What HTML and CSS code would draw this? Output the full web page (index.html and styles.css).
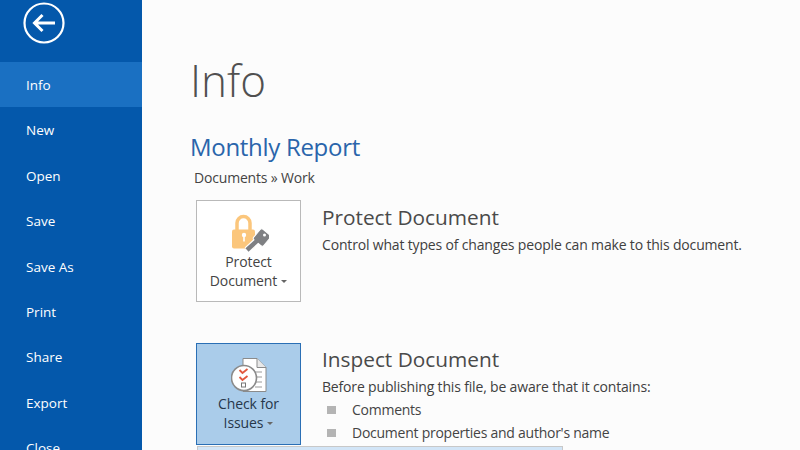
FILE: index.html
```html
<!DOCTYPE html>
<html lang="en">
<head>
    <meta charset="UTF-8">
    <title>Info</title>
    <link rel="stylesheet" href="styles.css">
</head>
<body>
  <div class="backstage">
    <nav class="sidebar">
      <div class="back-wrap">
        <svg class="back-icon" width="42" height="42" viewBox="0 0 42 42">
          <circle cx="21" cy="21" r="19.500" fill="none" stroke="#fff" stroke-width="2.200"/>
          <path d="M32 21H12M19.500 13L11.500 21L19.500 29" fill="none" stroke="#fff" stroke-width="3"/>
        </svg>
      </div>
      <a class="nav-item active">Info</a>
      <a class="nav-item">New</a>
      <a class="nav-item">Open</a>
      <a class="nav-item">Save</a>
      <a class="nav-item">Save As</a>
      <a class="nav-item">Print</a>
      <a class="nav-item">Share</a>
      <a class="nav-item">Export</a>
      <a class="nav-item">Close</a>
    </nav>

    <main class="content">
      <h1 class="page-title">Info</h1>
      <h2 class="doc-title">Monthly Report</h2>
      <div class="doc-path">Documents » Work</div>

      <section class="panel protect">
        <button class="tile">
          <svg class="tile-icon" width="40" height="38" viewBox="0 0 40 38">
            <path d="M8 17V9a6.500 6.500 0 0 1 13 0v8" fill="none" stroke="#fbc67c" stroke-width="3.500"/>
            <rect x="3" y="15.500" width="23" height="19" rx="2" fill="#fbc67c"/>
            <circle cx="15" cy="21" r="2.200" fill="#fff"/>
            <rect x="14.200" y="22" width="1.600" height="5.500" fill="#fff"/>
            <path d="M18 36L31 24" stroke="#fff" stroke-width="7"/>
            <rect x="26.500" y="16.500" width="13" height="14" rx="2" transform="rotate(40 33 23.500)" fill="#7f8083" stroke="#fff"/>
            <path d="M18 36L31 24" stroke="#7f8083" stroke-width="4.500"/>
            <circle cx="35.500" cy="21" r="1.500" fill="#fff"/>
          </svg>
          <span class="tile-label">Protect<br>Document<i class="caret"></i></span>
        </button>
        <div class="panel-text">
          <h3>Protect Document</h3>
          <p>Control what types of changes people can make to this document.</p>
        </div>
      </section>

      <section class="panel inspect">
        <button class="tile selected">
          <svg class="tile-icon" width="36" height="36" viewBox="0 0 36 36">
            <path d="M12 .5H26L35 9.500V33.500H12Z" fill="#fff" stroke="#8b8b8b"/>
            <path d="M26 .5V9.500H35" fill="#e8e8e8" stroke="#8b8b8b"/>
            <path d="M24 14H31M24 19H31M24 24H31M24 29H31" stroke="#9a9a9a" stroke-width="1.200"/>
            <circle cx="13" cy="20" r="12.500" fill="#fff" stroke="#8b8b8b" stroke-width="1.600"/>
            <path d="M8.500 12l3 3 5-4M8.500 19l3 3 5-4" fill="none" stroke="#e2583e" stroke-width="1.800"/>
            <rect x="10.500" y="25" width="4" height="4" fill="none" stroke="#777"/>
          </svg>
          <span class="tile-label">Check for<br>Issues<i class="caret"></i></span>
        </button>
        <div class="panel-text">
          <h3>Inspect Document</h3>
          <p>Before publishing this file, be aware that it contains:</p>
          <ul>
            <li>Comments</li>
            <li>Document properties and author's name</li>
          </ul>
        </div>
      </section>
      <div class="dropdown"></div>
    </main>
  </div>
</body>
</html>
```

FILE: styles.css
```css
* {
  box-sizing: border-box;
}

html, body {
  margin: 0;
  height: 100%;
  overflow: hidden;
}

body {
  font-family: "Open Sans", "Noto Sans", sans-serif;
  background-color: #fcfcfc;
  color: #444;
}

.backstage {
  display: flex;
  height: 450px;
  overflow: hidden;
}

.sidebar {
  width: 142px;
  flex-shrink: 0;
  background-color: #0458ab;
  color: #fff;
}

.back-wrap {
  height: 62px;
  padding: 2px 0 0 23px;
}

.back-icon {
  display: block;
}

.nav-item {
  display: block;
  height: 45.400px;
  padding: 0 0 0 26px;
  font-size: 13.500px;
  line-height: 47px;
}

.nav-item.active {
  background-color: #1a70c2;
}

.content {
  position: relative;
  flex: 1;
  padding: 0 0 0 48px;
}

.page-title {
  margin: 50px 0 0;
  font-size: 44px;
  font-weight: 300;
  line-height: 60px;
  color: #505050;
}

.doc-title {
  margin: 20px 0 0;
  font-size: 24px;
  font-weight: 400;
  letter-spacing: -0.3px;
  line-height: 34px;
  color: #2a65ab;
}

.doc-path {
  margin: 4px 0 0 4px;
  font-size: 14px;
  letter-spacing: -0.18px;
  line-height: 20px;
}

.panel {
  display: flex;
  margin: 12px 0 0 6px;
}

.panel.inspect {
  margin-top: 41px;
}

.tile {
  display: flex;
  flex-direction: column;
  align-items: center;
  justify-content: flex-start;
  width: 105px;
  height: 102px;
  flex-shrink: 0;
  padding: 0;
  border: 1px solid #b9b9b9;
  background-color: #fff;
  color: #444;
  font-family: inherit;
  text-align: center;
}

.tile.selected {
  border-color: #2a6fb5;
  background-color: #aaccea;
  color: #26374a;
}

.tile-icon {
  display: block;
  flex-shrink: 0;
  margin-top: 13px;
}

.selected .tile-icon {
  margin-top: 14px;
}

.tile-label {
  display: block;
  margin-top: -0.500px;
  font-size: 14px;
  letter-spacing: -0.1px;
  line-height: 19px;
}

.caret {
  display: inline-block;
  margin: 0 0 3px 4px;
  border: 3px solid transparent;
  border-top-color: #666;
  border-bottom-width: 0;
}

.panel-text {
  margin-left: 21px;
}

.protect .panel-text {
  padding-top: 1px;
}

.panel-text h3 {
  margin: 2px 0 0;
  font-size: 20.800px;
  font-weight: 400;
  line-height: 29px;
  color: #4a4a4a;
}

.panel-text p {
  margin: 3px 0 0;
  font-size: 14px;
  letter-spacing: -0.17px;
  line-height: 20px;
  color: #404040;
}

.panel-text ul {
  margin: 1px 0 0;
  padding: 0;
  list-style: none;
}

.panel-text li {
  display: flex;
  align-items: center;
  height: 23px;
  font-size: 14px;
  letter-spacing: -0.25px;
}

.panel-text li::before {
  content: "";
  width: 9px;
  height: 8px;
  margin: 0 16px 0 5px;
  background-color: #b4b4b4;
}

.dropdown {
  position: absolute;
  left: 55px;
  top: 446px;
  width: 366px;
  height: 20px;
  border: 1px solid #c8c8c8;
  background-color: #d2e5f7;
}
```
